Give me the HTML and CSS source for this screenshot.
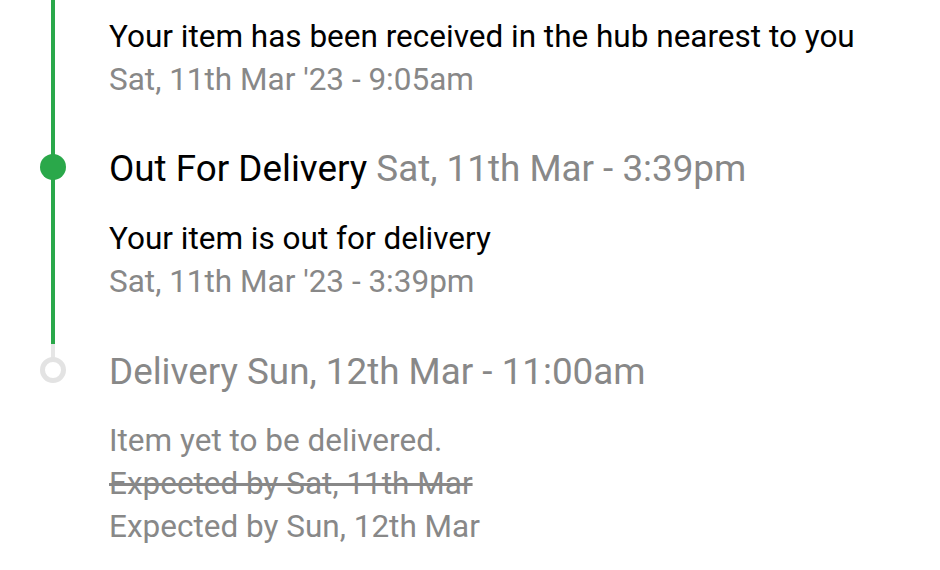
FILE: index.html
```html
<!DOCTYPE html>
<html lang="en">
<head>
    <meta charset="UTF-8">
    <meta name="viewport" content="width=device-width, initial-scale=1.0">
    <title>Tracking</title>
    <link rel="stylesheet" href="styles.css">
</head>
<body>
    <div class="timeline">
        <!-- tail of the previous step -->
        <div class="step step-tail">
            <div class="detail">
                <div class="note">Your item has been received in the hub nearest to you</div>
                <div class="time">Sat, 11th Mar '23 - 9:05am</div>
            </div>
        </div>

        <div class="step step-done">
            <span class="dot"></span>
            <div class="title">Out For Delivery <span class="when">Sat, 11th Mar - 3:39pm</span></div>
            <div class="detail">
                <div class="note">Your item is out for delivery</div>
                <div class="time">Sat, 11th Mar '23 - 3:39pm</div>
            </div>
        </div>

        <div class="step step-pending">
            <span class="dot"></span>
            <div class="title">Delivery <span>Sun, 12th Mar - 11:00am</span></div>
            <div class="detail">
                <div class="time">Item yet to be delivered.</div>
                <div class="time old">Expected by Sat, 11th Mar</div>
                <div class="time">Expected by Sun, 12th Mar</div>
            </div>
        </div>
    </div>
</body>
</html>
```

FILE: styles.css
```css
body {
    margin: 0;
    background: #fff;
    font-family: Roboto, "Liberation Sans", sans-serif;
    color: #000;
}

.timeline {
    width: 940px;
}

.step {
    position: relative;
    padding-left: 109px;
}

/* rail */
.step::before {
    content: "";
    position: absolute;
    left: 51px;
    top: 0;
    width: 4px;
    height: 100%;
    background-color: #2aa84a;
}

.step-tail {
    padding-top: 15px;
    padding-bottom: 44px;
}

.step-done {
    padding-bottom: 41px;
}

.step-pending {
    padding-top: 4px;
}

.step-pending::before {
    height: 14px;
    background-color: #e6e6e6;
}

.dot {
    position: absolute;
    left: 40px;
    top: 9px;
    width: 26px;
    height: 26px;
    box-sizing: border-box;
    border-radius: 50%;
    background-color: #2aa84a;
}

.step-pending .dot {
    top: 13px;
    background-color: #fff;
    border: 5px solid #e3e3e3;
}

.title {
    font-size: 36.8px;
    line-height: 48px;
    white-space: nowrap;
}

.title span {
    color: #888;
}

.step-pending .title {
    color: #888;
}

.step-done .detail {
    margin-top: 24px;
}

.step-pending .detail {
    margin-top: 23px;
}

.note,
.time {
    font-size: 31.5px;
    line-height: 43px;
}

.time {
    color: #888;
}

.old {
    text-decoration: line-through;
}
```
